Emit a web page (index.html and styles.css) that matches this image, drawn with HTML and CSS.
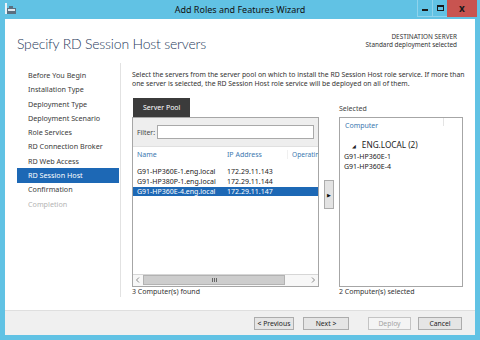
FILE: index.html
```html
<!DOCTYPE html>
<html lang="en">
<head>
  <meta charset="UTF-8" />
  <title>Add Roles and Features Wizard</title>
  <link rel="stylesheet" href="styles.css">
</head>
<body>
  <div class="window">
    <div class="titlebar">
      <span class="app-icon">
        <svg width="11" height="11" viewBox="0 0 11 11">
          <rect x="0" y="0" width="2" height="11" fill="#e8f2f8"/>
          <rect x="2" y="5" width="9" height="6" fill="#5a6f80"/>
          <rect x="3" y="6" width="7" height="2" fill="#dfe7ee"/>
          <rect x="4" y="3" width="4" height="2" fill="#5a6f80"/>
        </svg>
      </span>
      <span class="title">Add Roles and Features Wizard</span>
      <div class="controls">
        <span class="ctl ctl-min"><i></i></span>
        <span class="ctl ctl-max"><i></i></span>
        <span class="ctl ctl-close">x</span>
      </div>
    </div>

    <div class="client">
      <header class="head">
        <h1>Specify RD Session Host servers</h1>
        <div class="dest">
          <div>DESTINATION SERVER</div>
          <div>Standard deployment selected</div>
        </div>
      </header>

      <div class="body">
        <nav class="steps">
          <div class="step">Before You Begin</div>
          <div class="step">Installation Type</div>
          <div class="step">Deployment Type</div>
          <div class="step">Deployment Scenario</div>
          <div class="step">Role Services</div>
          <div class="step">RD Connection Broker</div>
          <div class="step">RD Web Access</div>
          <div class="step active">RD Session Host</div>
          <div class="step">Confirmation</div>
          <div class="step off">Completion</div>
        </nav>

        <main class="page">
          <p class="intro">Select the servers from the server pool on which to install the RD Session Host role service. If more than<br>one server is selected, the RD Session Host role service will be deployed on all of them.</p>

          <div class="panes">
            <div class="pool-col">
              <div class="tab">Server Pool</div>
              <div class="pool">
                <div class="filter">
                  <span class="filter-label">Filter:</span>
                  <span class="filter-input"></span>
                </div>
                <div class="grid-head">
                  <span class="c-name">Name</span>
                  <span class="c-ip">IP Address</span>
                  <span class="c-os">Operating</span>
                </div>
                <div class="rows">
                  <div class="row"><span class="c-name">G91-HP360E-1.eng.local</span><span class="c-ip">172.29.11.143</span></div>
                  <div class="row"><span class="c-name">G91-HP380P-1.eng.local</span><span class="c-ip">172.29.11.144</span></div>
                  <div class="row sel-row"><span class="c-name">G91-HP360E-4.eng.local</span><span class="c-ip">172.29.11.147</span></div>
                </div>
                <div class="hscroll">
                  <svg width="185" height="12" viewBox="0 0 185 12">
                    <rect x="0" y="0" width="185" height="12" fill="#f7f7f7"/>
                    <line x1="0" y1="0.5" x2="185" y2="0.5" stroke="#d6d6d6"/>
                    <rect x="10.5" y="1.5" width="141" height="9" fill="#cdcdcd" stroke="#b2b2b2"/>
                    <path d="M79.5 4v4M81.5 4v4M83.5 4v4" stroke="#666"/>
                    <path d="M6 3.5L3.5 6L6 8.5" fill="none" stroke="#888"/>
                    <path d="M179 3.5L181.5 6L179 8.5" fill="none" stroke="#888"/>
                  </svg>
                </div>
              </div>
              <div class="count">3 Computer(s) found</div>
            </div>

            <div class="mid">
              <button class="add">&#9654;</button>
            </div>

            <div class="sel-col">
              <div class="sel-label">Selected</div>
              <div class="sel">
                <div class="sel-head"><span>Computer</span></div>
                <div class="group"><span class="tri">&#9698;</span>ENG.LOCAL (2)</div>
                <div class="item">G91-HP360E-1</div>
                <div class="item">G91-HP360E-4</div>
              </div>
              <div class="count">2 Computer(s) selected</div>
            </div>
          </div>
        </main>
      </div>

      <footer class="foot">
        <button class="btn btn-prev">&lt; Previous</button>
        <button class="btn btn-next">Next &gt;</button>
        <button class="btn btn-deploy" disabled>Deploy</button>
        <button class="btn btn-cancel">Cancel</button>
      </footer>
    </div>
  </div>
</body>
</html>
```

FILE: styles.css
```css
* {
  box-sizing: border-box;
}
body {
  margin: 0;
  padding: 0;
  font-family: 'Noto Sans', 'Open Sans', sans-serif;
  color: #333;
}
.window {
  width: 480px;
  height: 340px;
  background: #61c2e4;
  display: flex;
  flex-direction: column;
}

/* title bar */
.titlebar {
  height: 19px;
  flex: none;
  display: flex;
  align-items: center;
  position: relative;
}
.app-icon {
  margin-left: 5px;
  margin-top: -3px;
  display: flex;
}
.title {
  position: absolute;
  left: 0;
  right: 0;
  text-align: center;
  font-size: 9px;
  color: #111;
  pointer-events: none;
}
.controls {
  margin-left: auto;
  margin-right: 4px;
  align-self: flex-start;
  display: flex;
}
.ctl {
  height: 17px;
  width: 16px;
  display: flex;
  justify-content: center;
  align-items: center;
  border: 1px solid #8fd3ec;
  border-top: none;
  margin-right: -1px;
}
.ctl-min i {
  width: 6px;
  height: 2px;
  background: #1a1a1a;
  margin-top: 3px;
}
.ctl-max i {
  width: 7px;
  height: 6px;
  border: 1px solid #1a1a1a;
  border-top-width: 2px;
}
.ctl-close {
  width: 30px;
  background: #c85450;
  border-color: #c85450;
  color: #1a1a1a;
  font-size: 10px;
  font-weight: 700;
  line-height: 1;
}

/* client area */
.client {
  flex: 1;
  margin: 0 5px 5px;
  background: #fff;
  display: flex;
  flex-direction: column;
}
.head {
  height: 44px;
  flex: none;
  display: flex;
  justify-content: space-between;
  align-items: flex-start;
}
.head h1 {
  margin: 16px 0 0 12px;
  font-family: 'Lato', 'Open Sans', sans-serif;
  font-weight: 300;
  font-size: 14px;
  letter-spacing: -0.2px;
  line-height: 18px;
  color: #1f3a5c;
}
.dest {
  margin: 14px 18px 0 0;
  text-align: right;
  font-size: 6.4px;
  line-height: 8px;
  color: #333;
}

.body {
  flex: 1;
  display: flex;
}
.steps {
  width: 116px;
  flex: none;
  padding: 5px 1px 0 12px;
  margin-bottom: 13px;
  border-right: 1px solid #e2e2e2;
}
.step {
  height: 14.3px;
  line-height: 14.3px;
  padding-left: 11px;
  font-size: 7.2px;
  color: #3a3a3a;
  white-space: nowrap;
}
.step.active {
  height: 15.5px;
  line-height: 15.5px;
  margin: -0.5px 0 -0.7px;
  background: #1d68b5;
  color: #fff;
}
.step.off {
  color: #b4b4b4;
}

.page {
  flex: 1;
  padding: 8px 12px 0 11px;
}
.intro {
  margin: 0;
  font-size: 6.85px;
  line-height: 8.7px;
  white-space: nowrap;
  color: #333;
}
.panes {
  margin-top: 10px;
  display: flex;
}
.pool-col {
  width: 187px;
}
.tab {
  width: 57px;
  height: 19px;
  margin-left: 1px;
  background: #3b3b3b;
  color: #fff;
  font-size: 7px;
  line-height: 19px;
  padding-left: 10px;
}
.pool {
  height: 170px;
  border: 1px solid #a6a6a6;
  display: flex;
  flex-direction: column;
}
.filter {
  height: 29px;
  flex: none;
  background: #eeeeee;
  border-bottom: 1px solid #e0e0e0;
  display: flex;
  align-items: center;
  padding: 0 4px;
}
.filter-label {
  font-size: 6.8px;
  color: #444;
  width: 20px;
}
.filter-input {
  flex: 1;
  height: 14px;
  background: #fff;
  border: 1px solid #a9a9a9;
}
.grid-head {
  height: 15px;
  flex: none;
  display: flex;
  align-items: center;
  font-size: 7px;
  color: #3c78b0;
}
.c-name {
  width: 94px;
  padding-left: 4px;
  flex: none;
}
.c-ip {
  width: 60px;
  flex: none;
}
.c-os {
  min-width: 0;
  overflow: hidden;
  white-space: nowrap;
  flex: 1;
  border-left: 1px solid #f0f0f0;
  padding-left: 4px;
  font-size: 6.6px;
}
.rows {
  flex: 1;
  min-height: 0;
  padding-top: 5px;
}
.row {
  height: 9.6px;
  line-height: 9.6px;
  display: flex;
  font-size: 7px;
  color: #222;
  white-space: nowrap;
}
.row.sel-row {
  background: #1d68b5;
  color: #fff;
}
.hscroll {
  height: 12px;
  flex: none;
  display: flex;
}
.hscroll svg {
  display: block;
}
.count {
  font-size: 7px;
  line-height: 10px;
  color: #333;
  white-space: nowrap;
}

.mid {
  width: 20px;
  flex: none;
  padding-top: 82px;
  display: flex;
  justify-content: center;
  align-items: flex-start;
}
.add {
  width: 10px;
  height: 29px;
  padding: 0;
  background: #e3e3e3;
  border: 1px solid #acacac;
  font-size: 5px;
  color: #111;
  font-family: 'DejaVu Sans', sans-serif;
}

.sel-col {
  width: 124px;
}
.sel-label {
  height: 19px;
  line-height: 21px;
  font-size: 7px;
  color: #444;
}
.sel {
  height: 170px;
  border: 1px solid #a6a6a6;
}
.sel-head {
  height: 16px;
  padding-left: 5px;
  font-size: 7px;
  line-height: 16px;
  color: #3c78b0;
  position: relative;
}
.sel-head::after {
  content: '';
  position: absolute;
  left: 103px;
  top: 0;
  height: 8px;
  border-left: 1px solid #e4e4e4;
}
.group {
  margin-top: 5px;
  padding-left: 12px;
  font-size: 8.2px;
  line-height: 11px;
  color: #222;
}
.tri {
  font-family: 'DejaVu Sans', sans-serif;
  font-size: 5px;
  margin-right: 6px;
  color: #222;
}
.item {
  padding-left: 4px;
  font-size: 7px;
  line-height: 10px;
  color: #222;
}

/* buttons row */
.foot {
  height: 25px;
  flex: none;
  background: #f0f0f0;
  border-top: 1px solid #dfdfdf;
  display: flex;
  justify-content: flex-end;
  align-items: center;
  padding-right: 13px;
}
.btn {
  height: 13px;
  padding: 0;
  font-family: 'Noto Sans', 'Open Sans', sans-serif;
  font-size: 6.8px;
  line-height: 11px;
  color: #222;
  background: #e5e5e5;
  border: 1px solid #acacac;
}
.btn-prev {
  width: 40px;
}
.btn-next {
  width: 46px;
  margin-left: 9px;
}
.btn-deploy {
  width: 43px;
  margin-left: 19px;
  color: #a3a3a3;
  background: #f4f4f4;
  border-color: #c4c4c4;
}
.btn-cancel {
  width: 44px;
  margin-left: 7px;
}
```
